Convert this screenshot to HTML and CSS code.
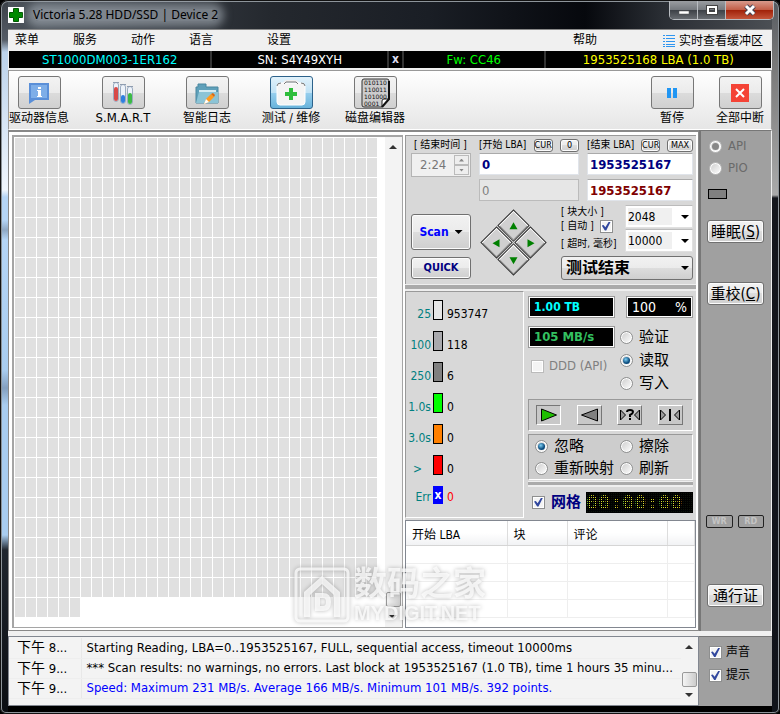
FILE: index.html
```html
<!DOCTYPE html>
<html lang="zh-CN">
<head>
    <meta charset="UTF-8">
    <meta name="viewport" content="width=device-width, initial-scale=1.0">
    <title>Victoria 5.28 HDD/SSD | Device 2</title>
    <link rel="stylesheet" href="styles.css">
</head>
<body>
<div class="window">
    <header class="titlebar">
        <svg class="app-icon" width="16" height="16" viewBox="0 0 16 16"><rect width="16" height="16" fill="#fff"/><path d="M5.500 1.500h5v4h4v5h-4v4h-5v-4h-4v-5h4z" fill="#008a00" stroke="#005a00"/></svg>
        <span class="title">Victoria 5.28 HDD/SSD | Device 2</span>
        <div class="win-buttons">
            <button class="win-btn" aria-label="Minimize"><svg width="12" height="12" viewBox="0 0 12 12"><path d="M1 7h10v3H1z" fill="#fff" stroke="#555" stroke-width=".5"/></svg></button>
            <button class="win-btn" aria-label="Maximize"><svg width="12" height="12" viewBox="0 0 12 12"><path d="M2 3h8v6H2z" fill="none" stroke="#444" stroke-width="4"/><path d="M2 3h8v6H2z" fill="none" stroke="#fff" stroke-width="2"/></svg></button>
            <button class="win-btn win-close" aria-label="Close"><svg width="14" height="12" viewBox="0 0 14 12"><path d="M3 2l8 8M11 2l-8 8" stroke="#445" stroke-width="5"/><path d="M3 2l8 8M11 2l-8 8" stroke="#fff" stroke-width="3"/></svg></button>
        </div>
    </header>

    <div class="client">
        <nav class="menubar">
            <a href="#">菜单</a>
            <a href="#">服务</a>
            <a href="#">动作</a>
            <a href="#">语言</a>
            <a href="#" class="menu-settings">设置</a>
            <a href="#" class="menu-help">帮助</a>
            <a href="#" class="menu-buffer"><svg width="12" height="12" viewBox="0 0 12 12"><path d="M0 .5h2M3 .5h9M0 3.500h2M3 3.500h9M0 6.500h2M3 6.500h9M0 9.500h2M3 9.500h9M0 11.500h2M3 11.500h9" stroke="#2e95f0"/></svg>实时查看缓冲区</a>
        </nav>

        <div class="infobar">
            <span class="info-model">ST1000DM003-1ER162</span>
            <span class="info-sn">SN: S4Y49XYH</span>
            <button class="info-x">x</button>
            <span class="info-fw">Fw: CC46</span>
            <span class="info-lba">1953525168 LBA (1.0 TB)</span>
        </div>

        <div class="toolbar">
            <div class="tool">
                <button class="tool-btn" id="t-info"><svg width="24" height="24" viewBox="0 0 24 24"><path d="M2 2h20v17H8l-6 4z" fill="#5a8fd8"/><path d="M4 4h16v13H4z" fill="#7eaee8"/><path d="M11 6h3v2h-3zM10 9h4v6h1v1h-5v-1h1v-5h-1z" fill="#fff"/></svg></button>
                <label for="t-info">驱动器信息</label>
            </div>
            <div class="tool">
                <button class="tool-btn" id="t-smart"><svg width="24" height="24" viewBox="0 0 24 24"><g stroke="#9aabc0" fill="#eef3fa"><rect x="2.500" y="1.500" width="5" height="19" rx="2.500"/><rect x="9.500" y="3.500" width="5" height="19" rx="2.500"/><rect x="16.500" y="5.500" width="5" height="18" rx="2.500"/></g><rect x="3" y="6" width="4" height="14" rx="2" fill="#d84a48"/><rect x="10" y="14" width="4" height="8" rx="2" fill="#2f7fe0"/><rect x="17" y="12" width="4" height="11" rx="2" fill="#3cba46"/><path d="M2 1.500h6M9 3.500h6M16 5.500h6" stroke="#8f9db0"/></svg></button>
                <label for="t-smart" class="smart">S.M.A.R.T</label>
            </div>
            <div class="tool">
                <button class="tool-btn" id="t-log"><svg width="26" height="24" viewBox="0 0 26 24"><path d="M2 22V6h2V3h8v3h12v16z" fill="#5fa0ba" stroke="#4a87a0"/><path d="M5 9h17v5H5z" fill="#d5ebf2"/><path d="M2 22l3-11h19v11z" fill="#8cc4d6"/><path d="M10 23l2-5 5-5 3 3-5 5z" fill="#ff9a1f"/><path d="M10 23l2-5 3 3z" fill="#fff"/><path d="M17 13l2-1 2 2-1 2z" fill="#e06a10"/></svg></button>
                <label for="t-log">智能日志</label>
            </div>
            <div class="tool">
                <button class="tool-btn tool-active" id="t-test"><svg width="30" height="26" viewBox="0 0 30 26"><path d="M8 4q0-3 3-3h8q3 0 3 3" fill="none" stroke="#eee" stroke-width="2"/><rect x="1" y="3" width="28" height="22" rx="3" fill="#f4f4f4" stroke="#fff"/><path d="M1 6q0-3 4-3M25 3q4 0 4 3M8 4l2-2h10l2 2" fill="none" stroke="#777"/><path d="M13 8h4v4h4v4h-4v4h-4v-4H9v-4h4z" fill="#2ebd3c"/></svg></button>
                <label for="t-test">测试 / 维修</label>
            </div>
            <div class="tool">
                <button class="tool-btn" id="t-editor"><svg width="30" height="30" viewBox="0 0 30 30"><path d="M4 1h23q2 0 2 2v18l-7 8H4q-2 0-2-2V3q0-2 2-2z" fill="#ccc" stroke="#333"/><path d="M22 29v-6q0-2 2-2h5z" fill="#fff" stroke="#222"/><path d="M29 3v18l-7 8" fill="none" stroke="#111" stroke-width="2"/><g font-family="DejaVu Sans" font-size="6" fill="#111"><text x="4" y="7">010110</text><text x="4" y="14">110011</text><text x="4" y="21">101000</text><text x="4" y="28">0001</text></g></svg></button>
                <label for="t-editor">磁盘编辑器</label>
            </div>
            <div class="tool tool-right">
                <button class="tool-btn" id="t-pause"><svg width="12" height="12" viewBox="0 0 12 12"><path d="M1 1h4v10H1zM7 1h4v10H7z" fill="#2196f3"/></svg></button>
                <label for="t-pause">暂停</label>
            </div>
            <div class="tool tool-break">
                <button class="tool-btn" id="t-break"><svg width="18" height="18" viewBox="0 0 18 18"><rect width="18" height="18" fill="#f44336"/><path d="M5 5l8 8M13 5l-8 8" stroke="#fff" stroke-width="2"/></svg></button>
                <label for="t-break">全部中断</label>
            </div>
        </div>

        <main class="main">
            <div class="workspace">
                <div class="map-panel">
                    <div class="map" id="map"></div>
                    <div class="scrollbar"><i class="up"></i><i class="thumb"></i><i class="down"></i></div>
                </div>

                <div class="control">
                    <section class="params">
                        <div class="param-side">
                            <label class="small-label" for="end-time">[ 结束时间 ]</label>
                            <div class="spin">
                                <input id="end-time" type="text" value="2:24" disabled>
                                <div class="spin-btns"><button disabled aria-label="Up"><i class="up"></i></button><button disabled aria-label="Down"><i class="down"></i></button></div>
                            </div>
                            <button class="btn scan">Scan <i class="drop"></i></button>
                            <button class="btn quick">QUICK</button>
                        </div>
                        <div class="param-body">
                            <div class="lba">
                                <div class="lba-head"><label for="start-lba">[开始 LBA]</label><button class="btn mini">CUR</button><button class="btn mini">0</button></div>
                                <div class="lba-head"><label for="end-lba">[结束 LBA]</label><button class="btn mini">CUR</button><button class="btn mini mini-max">MAX</button></div>
                                <input id="start-lba" type="text" value="0">
                                <input id="end-lba" type="text" value="1953525167">
                                <input class="gray" type="text" value="0" aria-label="Current LBA" disabled>
                                <input class="red" type="text" value="1953525167" aria-label="Last LBA">
                            </div>
                            <div class="param-low">
                                <div class="diamond">
                                    <button aria-label="Up"><svg width="10" height="10" viewBox="0 0 10 10"><path d="M5 1l4 7H1z"/></svg></button>
                                    <button aria-label="Right"><svg width="10" height="10" viewBox="0 0 10 10"><path d="M9 5L2 1v8z"/></svg></button>
                                    <button aria-label="Left"><svg width="10" height="10" viewBox="0 0 10 10"><path d="M1 5l7-4v8z"/></svg></button>
                                    <button aria-label="Down"><svg width="10" height="10" viewBox="0 0 10 10"><path d="M5 9L1 2h8z"/></svg></button>
                                </div>
                                <div class="settings">
                                    <div class="setting-labels">
                                        <label for="block">[ 块大小 ]</label>
                                        <label class="auto">[ 自动 ] <input type="checkbox" checked></label>
                                        <label for="timeout">[ 超时, 毫秒]</label>
                                    </div>
                                    <div class="setting-fields">
                                        <div class="combo"><select id="block"><option>2048</option></select></div>
                                        <div class="combo"><select id="timeout"><option>10000</option></select></div>
                                    </div>
                                    <div class="combo combo-end"><select aria-label="结束动作"><option>测试结束</option></select></div>
                                </div>
                            </div>
                        </div>
                    </section>

                    <div class="splitter"></div>

                    <section class="status">
                        <div class="legend">
                            <div class="leg"><span class="ms">25</span><i class="bar b1"></i><span>953747</span></div>
                            <div class="leg"><span class="ms">100</span><i class="bar b2"></i><span>118</span></div>
                            <div class="leg"><span class="ms">250</span><i class="bar b3"></i><span>6</span></div>
                            <div class="leg"><span class="ms">1.0s</span><i class="bar b4"></i><span>0</span></div>
                            <div class="leg"><span class="ms">3.0s</span><i class="bar b5"></i><span>0</span></div>
                            <div class="leg"><span class="ms ms-over">&gt;</span><i class="bar b6"></i><span>0</span></div>
                            <div class="leg err"><span class="ms">Err</span><i class="bar b7">x</i><span>0</span></div>
                        </div>
                        <div class="state">
                            <div class="readouts">
                                <div class="readout-left">
                                    <output class="lcd cyan">1.00 TB</output>
                                    <output class="lcd green">105 MB/s</output>
                                    <label class="opt ddd"><input type="checkbox" disabled>DDD (API)</label>
                                </div>
                                <div class="readout-right">
                                    <output class="lcd percent"><span>100</span><span>%</span></output>
                                    <label class="opt"><input type="radio" name="mode">验证</label>
                                    <label class="opt"><input type="radio" name="mode" checked>读取</label>
                                    <label class="opt"><input type="radio" name="mode">写入</label>
                                </div>
                            </div>
                            <div class="inset playback">
                                <button class="pressed" aria-label="Forward"><svg width="20" height="16" viewBox="0 0 20 16"><path d="M2.500 2v12l15-6z" fill="#1fc000" stroke="#000"/></svg></button>
                                <button aria-label="Back"><svg width="20" height="16" viewBox="0 0 20 16"><path d="M18.500 2v12l-16-6z" fill="#808080" stroke="#000"/></svg></button>
                                <button aria-label="Random"><svg width="22" height="16" viewBox="0 0 22 16"><path d="M1.500 3v10l5-5zM20.500 3v10l-5-5z" fill="#999" stroke="#000"/><path d="M8 5q0-2 3-2t3 2q0 1.500-3 3v2M11 11v2" fill="none" stroke="#000" stroke-width="2"/></svg></button>
                                <button aria-label="Butterfly"><svg width="22" height="16" viewBox="0 0 22 16"><path d="M1.500 3v10l5-5zM20.500 3v10l-5-5z" fill="#999" stroke="#000"/><path d="M11 2v12" stroke="#000" stroke-width="2"/></svg></button>
                            </div>
                            <div class="inset actions">
                                <label class="opt"><input type="radio" name="action" checked>忽略</label>
                                <label class="opt"><input type="radio" name="action">擦除</label>
                                <label class="opt"><input type="radio" name="action">重新映射</label>
                                <label class="opt"><input type="radio" name="action">刷新</label>
                            </div>
                            <div class="splitter splitter-small"></div>
                            <div class="grid-row">
                                <label class="opt grid-opt"><input type="checkbox" checked>网格</label>
                                <output class="clock">00:00:00</output>
                            </div>
                        </div>
                    </section>

                    <div class="defects">
                        <table>
                            <thead>
                                <tr><th class="c-lba">开始 LBA</th><th class="c-block">块</th><th class="c-note">评论</th><th></th></tr>
                            </thead>
                            <tbody>
                                <tr><td></td><td></td><td></td><td></td></tr>
                                <tr><td></td><td></td><td></td><td></td></tr>
                                <tr><td></td><td></td><td></td><td></td></tr>
                                <tr><td></td><td></td><td></td><td></td></tr>
                            </tbody>
                        </table>
                    </div>
                </div>

                <div class="watermark">
                    <svg width="56" height="56" viewBox="0 0 56 56"><rect x="2" y="2" width="52" height="52" rx="4"/><path d="M10 50V25l18-16 18 16v25h-6V28L28 17 16 28v22z"/><path d="M21 26h8q8 0 8 9t-8 9h-8zM26 31v8h3q3 0 3-4t-3-4z"/></svg>
                    <div><b>数码之家</b><span>MYDIGIT.NET</span></div>
                </div>
            </div>

            <aside class="sidebar">
                <label class="opt api"><input type="radio" name="api" checked disabled>API</label>
                <label class="opt api"><input type="radio" name="api" disabled>PIO</label>
                <i class="lamp"></i>
                <button class="btn side-btn">睡眠(<u>S</u>)</button>
                <button class="btn side-btn recal">重校(<u>C</u>)</button>
                <div class="leds"><span>WR</span><span>RD</span></div>
                <button class="btn side-btn">通行证</button>
            </aside>
        </main>

        <footer class="bottom">
            <div class="log">
                <table>
                    <tr><td class="time"><span>下午</span> 8...</td><td>Starting Reading, LBA=0..1953525167, FULL, sequential access, timeout 10000ms</td></tr>
                    <tr><td class="time"><span>下午</span> 9...</td><td>*** Scan results: no warnings, no errors. Last block at 1953525167 (1.0 TB), time 1 hours 35 minu...</td></tr>
                    <tr class="speed"><td class="time"><span>下午</span> 9...</td><td>Speed: Maximum 231 MB/s. Average 166 MB/s. Minimum 101 MB/s. 392 points.</td></tr>
                </table>
                <div class="scrollbar"><i class="up"></i><i class="thumb"></i><i class="down"></i></div>
            </div>
            <div class="log-opts">
                <label class="opt"><input type="checkbox" checked>声音</label>
                <label class="opt"><input type="checkbox" checked>提示</label>
            </div>
        </footer>
    </div>
</div>

<script>
    // one cell per displayed block of the scan
    const map = document.getElementById("map");
    for (let i = 0; i < 765; i++) {
        map.appendChild(document.createElement("i"));
    }
</script>
</body>
</html>
```

FILE: styles.css
```css
* {
    box-sizing: border-box;
}

body {
    margin: 0;
    background-color: #000;
    font: 12px/16px "DejaVu Sans Condensed", "Noto Sans CJK SC", sans-serif;
    color: #000;
}

button, input, select {
    font: inherit;
    color: inherit;
    margin: 0;
    padding: 0;
}

svg {
    display: block;
}

.window {
    display: flex;
    flex-direction: column;
    min-height: 100vh;
    padding: 0 8px 8px;
    border-radius: 8px 8px 6px 6px;
    box-shadow: inset 0 0 0 1px #111, inset 0 0 0 2px #8d949a;
    background: linear-gradient(#3c4148, #555c66 40px, #bcd3ec 52px, #f0f6fd 190px, #b5d5f6 197px, #b5d5f6 220px, #8fa8c4 230px, #b5d5f6 240px, #a9cdf0 370px, #84a0c0 388px, #a9cdf0 405px, #a9cdf0 535px, #20262e 550px, #0a0d12) 0 0 / 8px 100% no-repeat,
        linear-gradient(#555a60, #777 60px, #aaa 195px, #14161c 198px, #10131a) 100% 0 / 8px 100% no-repeat,
        linear-gradient(#000, #000) 0 100% / 100% 8px no-repeat,
        linear-gradient(90deg, #4d545c, #24282e 35%, #1a1e25 55%, #06080d 75%, #2a2e34 85%, #4d5156);
}

/* title bar */
.titlebar {
    display: flex;
    align-items: center;
    height: 29px;
}

.title {
    margin-left: 9px;
    font-family: "Noto Sans", sans-serif;
    background-color: rgba(170, 178, 186, .6);
    box-shadow: 0 0 8px 6px rgba(170, 178, 186, .6);
    border-radius: 6px;
    line-height: 12px;
}

.win-buttons {
    display: flex;
    align-self: flex-start;
    margin: 1px -2px 0 auto;
    border: 1px solid #b9bdc2;
    border-top: 0;
    border-radius: 0 0 5px 5px;
    overflow: hidden;
}

.win-btn {
    display: grid;
    place-items: center;
    width: 28px;
    height: 18px;
    border: 0;
    border-right: 1px solid #b9bdc2;
    background: linear-gradient(#9a9da1, #74787d 50%, #3c4046 50%, #686c71);
}

.win-close {
    width: 47px;
    border-right: 0;
    background: linear-gradient(#d89a8c, #c25c45 50%, #a02008 50%, #c4553a);
}

.client {
    flex: 1;
    display: flex;
    flex-direction: column;
    border-top: 1px solid #888;
    background-color: #f0f0f0;
}

/* menu */
.menubar {
    display: flex;
    gap: 34px;
    height: 21px;
    padding: 0 9px 0 7px;
    line-height: 20px;
}

.menubar a {
    color: #000;
    text-decoration: none;
}

.menu-settings {
    margin-left: 20px;
}

.menu-help {
    margin-left: auto;
}

.menu-buffer {
    display: flex;
    align-items: center;
    gap: 4px;
    margin-left: 32px;
}

/* drive passport line */
.infobar {
    display: flex;
    gap: 2px;
    height: 17px;
    margin: 0 1px;
    background-color: #333;
    font-size: 13px;
    line-height: 17px;
    text-align: center;
}

.infobar > * {
    background-color: #000;
}

.info-model {
    flex: 202;
    color: #0ff;
}

.info-sn {
    flex: 175;
    color: #fff;
}

.info-x {
    width: 13px;
    border: 0;
    color: #dcdcf0;
    font-size: 12px;
    font-weight: bold;
}

.info-fw {
    flex: 140;
    color: #0f0;
}

.info-lba {
    flex: 226;
    color: #ff0;
}

/* toolbar */
.toolbar {
    display: flex;
    gap: 24px;
    height: 60px;
    margin-top: 2px;
    padding: 5px 1px 0 0;
    border: 1px solid #999;
    border-bottom-color: #fff;
    background: linear-gradient(#fff, #e6e6e6);
}

.tool {
    display: flex;
    flex-direction: column;
    align-items: center;
    width: 60px;
    gap: 1px;
    white-space: nowrap;
}

.tool-btn {
    display: grid;
    place-items: center;
    width: 43px;
    height: 33px;
    border: 1px solid #777;
    border-radius: 3px;
    background: linear-gradient(#f3f3f3, #ebebeb 50%, #dcdcdc 50%, #d0d0d0);
}

.tool-active {
    border-color: #2c628b;
    background: linear-gradient(#e2f2fb, #c0e2f5 50%, #98cfee 50%, #68b3db);
}

.smart {
    font-size: 13px;
}

.tool-right {
    margin-left: auto;
}

.tool-break {
    margin-left: -16px;
}

/* main area */
.main {
    flex: 1;
    display: flex;
}

.workspace {
    position: relative;
    flex: 1;
    display: flex;
    gap: 2px;
    padding: 3px 2px 2px 3px;
    border: 1px solid #888;
    border-top-width: 2px;
    background-color: #fff;
}

.map-panel {
    flex: 1;
    display: flex;
    justify-content: space-between;
    border: 2px solid #a5a5a5;
    border-width: 2px 1px 1px 2px;
    background-color: #fff;
}

.map {
    flex: 1;
    display: grid;
    grid-template-columns: repeat(auto-fill, 10px);
    grid-auto-rows: 19px;
    gap: 1px;
    padding: 1px;
}

.map i {
    background-color: #e0e0e0;
}

.scrollbar {
    display: flex;
    flex-direction: column;
    align-items: center;
    width: 17px;
    padding: 8px 1px 8px 0;
    background-color: #f3f3f3;
}

.up, .down, .drop {
    width: 8px;
    height: 4px;
    background-color: #333;
    clip-path: polygon(0 0, 100% 0, 50% 100%);
}

.up {
    clip-path: polygon(50% 0, 100% 100%, 0 100%);
}

.thumb {
    width: 15px;
    height: 15px;
    margin: auto 0 8px;
    border: 1px solid #999;
    border-radius: 2px;
    background: linear-gradient(90deg, #f4f4f4, #ccc);
}

/* control panel */
.control {
    width: 291px;
    display: flex;
    flex-direction: column;
    background-color: #d8d8d8;
}

.params {
    display: flex;
    gap: 8px;
    padding: 1px 3px 4px 5px;
    border: 1px solid #999;
    border-width: 1px 0 0 1px;
}

.param-side {
    display: flex;
    flex-direction: column;
    width: 60px;
}

.small-label, .lba-head label, .setting-labels {
    font-size: 10px;
    line-height: 16px;
    white-space: nowrap;
}

.small-label {
    padding-left: 3px;
}

.spin {
    display: flex;
    height: 24px;
    padding: 1px;
    border: 1px solid #b4b4b4;
    background-color: #f0f0f0;
}

.spin input {
    flex: 1;
    width: 0;
    border: 0;
    padding-left: 7px;
    background: none;
    color: #777;
    font-size: 13px;
}

.spin-btns {
    display: flex;
    flex-direction: column;
    width: 15px;
}

.spin-btns button {
    flex: 1;
    display: grid;
    place-items: center;
    border: 1px solid #bbb;
    background-color: #eee;
}

.spin-btns i {
    width: 5px;
    height: 3px;
    background-color: #888;
}

.btn {
    border: 1px solid #707070;
    border-radius: 3px;
    box-shadow: inset 0 0 0 1px #fcfcfc;
    background: linear-gradient(#f2f2f2, #ebebeb 50%, #dddddd 50%, #cfcfcf);
}

.scan {
    display: flex;
    align-items: center;
    justify-content: center;
    gap: 6px;
    height: 36px;
    margin-top: 37px;
    color: #00f;
    font-weight: bold;
}

.scan .drop {
    background-color: #000;
}

.quick {
    height: 22px;
    margin-top: 7px;
    color: #000080;
    font-weight: bold;
    font-size: 11px;
}

.param-body {
    flex: 1;
}

.lba {
    display: grid;
    grid-template-columns: 100px 1fr;
    column-gap: 8px;
    row-gap: 4px;
}

.lba-head {
    display: flex;
    align-items: center;
    justify-content: space-between;
    height: 16px;
    margin-bottom: -4px;
}

.mini {
    width: 19px;
    height: 13px;
    font-size: 9px;
    line-height: 10px;
}

.mini-max {
    width: 26px;
}

.lba input {
    width: 100%;
    height: 22px;
    padding: 0 2px;
    border: 1px solid #e0e4ea;
    border-top-color: #aaa;
    background-color: #fff;
    color: #000080;
    font-size: 13px;
    font-weight: bold;
}

.lba input.red {
    color: #800000;
}

.lba input.gray {
    background-color: #e6e6e6;
    color: #808080;
    font-weight: normal;
}

.param-low {
    display: flex;
    align-items: center;
    justify-content: space-between;
    margin-top: 4px;
}

.diamond {
    display: grid;
    grid-template-columns: 23px 23px;
    grid-auto-rows: 23px;
    gap: 1px;
    margin-left: 11px;
    transform: rotate(45deg);
}

.diamond button {
    display: grid;
    place-items: center;
    border: 1px solid #333;
    box-shadow: inset 1px 1px #fff, inset -1px -1px #999;
    background-color: #d0d0d0;
}

.diamond svg {
    transform: rotate(-45deg);
    fill: #008000;
}

.settings {
    display: grid;
    grid-template-columns: 1fr 68px;
    width: 132px;
    row-gap: 4px;
}

.setting-labels {
    display: flex;
    flex-direction: column;
    line-height: 14px;
}

.setting-labels label:last-child {
    margin-top: 4px;
}

.auto {
    display: flex;
    align-items: center;
    gap: 6px;
}

.setting-fields {
    display: flex;
    flex-direction: column;
    gap: 1px;
}

.combo {
    position: relative;
    height: 23px;
}

.combo select {
    appearance: none;
    width: 100%;
    height: 100%;
    padding-left: 2px;
    border: 1px solid #e0e0e0;
    border-top-color: #bbb;
    border-radius: 0;
    background: linear-gradient(#f0f0f0, #f0f0f0) 2px 2px / 44px 17px no-repeat #fff;
    outline: 0;
}

.combo::after {
    content: "";
    position: absolute;
    right: 4px;
    top: 10px;
    width: 8px;
    height: 4px;
    background-color: #000;
    clip-path: polygon(0 0, 100% 0, 50% 100%);
}

.combo-end {
    grid-column: 1 / -1;
    height: 24px;
}

.combo-end select {
    padding-left: 4px;
    border: 1px solid #707070;
    border-radius: 3px;
    background: linear-gradient(#f2f2f2, #ebebeb 50%, #dddddd 50%, #cfcfcf);
    font-size: 16px;
    font-weight: bold;
}

.splitter {
    height: 7px;
    border: solid #eee;
    border-width: 1px 0 2px;
    background-color: #aaa;
}

/* inputs */
input[type="checkbox"], input[type="radio"] {
    appearance: none;
    display: grid;
    place-items: center;
    flex: none;
    width: 13px;
    height: 13px;
    border: 1px solid #8e8f8f;
    background-color: #f4f4f4;
    box-shadow: inset 0 0 0 1px #fff;
}

input[type="radio"] {
    border-radius: 50%;
    background: linear-gradient(135deg, #ccc, #fff);
}

input[type="checkbox"]:checked::before {
    content: "";
    width: 9px;
    height: 9px;
    background-color: #31479e;
    clip-path: polygon(0 45%, 20% 40%, 40% 65%, 80% 0, 100% 0, 50% 100%, 35% 100%);
}

input[type="radio"]:checked::before {
    content: "";
    width: 7px;
    height: 7px;
    border-radius: 50%;
    background: radial-gradient(circle at 40% 35%, #7fd0f5, #0a4a7c 60%);
}

input:disabled {
    border-color: #bbb;
}

input[type="radio"]:disabled:checked::before {
    background: #888;
}

.opt {
    display: flex;
    align-items: center;
    gap: 6px;
    font-size: 15px;
    line-height: 22px;
    white-space: nowrap;
}

/* speed legend and state */
.status {
    display: flex;
    height: 227px;
}

.legend {
    display: flex;
    flex-direction: column;
    gap: 11px;
    width: 119px;
    padding: 8px 0 0;
    border: 1px solid #999;
    border-right-color: #fff;
    border-bottom-color: #fff;
}

.leg {
    display: grid;
    grid-template-columns: 25px 10px 1fr;
    column-gap: 2px;
    height: 20px;
    line-height: 29px;
}

.leg span:last-child {
    padding-left: 2px;
}

.ms {
    color: #008080;
    text-align: right;
}

.ms-over {
    padding-right: 9px;
}

.bar {
    height: 20px;
    border: 1px solid #000;
}

.b1 { background-color: #e6e6e6; }
.b2 { background-color: #a9a9ad; }
.b3 { background-color: #808080; }
.b4 { background-color: #0f0; }
.b5 { background-color: #ff8000; }
.b6 { background-color: #f00; }

.b7 {
    height: 18px;
    border: 0;
    background-color: #00f;
    color: #fff;
    font-style: normal;
    font-weight: bold;
    line-height: 18px;
    text-align: center;
}

.err {
    color: #f00;
}

.err .ms, .err span {
    line-height: 22px;
}

.state {
    flex: 1;
    display: flex;
    flex-direction: column;
    padding: 5px 3px 0 4px;
}

.readouts {
    display: flex;
    justify-content: space-between;
    height: 100px;
}

.readout-left {
    display: flex;
    flex-direction: column;
    gap: 8px;
}

.readout-right {
    width: 73px;
}

.lcd {
    display: flex;
    width: 87px;
    height: 22px;
    padding: 0 5px;
    border: 1px solid #999;
    box-shadow: inset 0 0 0 1px #fff;
    background-color: #000;
    font-size: 12px;
    font-weight: bold;
    line-height: 20px;
}

.cyan {
    color: #0ff;
}

.green {
    color: #33c060;
    font-size: 13px;
}

.percent {
    justify-content: space-between;
    width: 67px;
    margin: 0 0 8px auto;
    color: #fff;
    font-size: 14px;
    font-weight: normal;
}

.readout-right .opt {
    line-height: 23px;
}

.ddd {
    gap: 5px;
    margin-left: 3px;
    color: #808080;
    font-size: 13px;
    line-height: 20px;
}

.inset {
    border: 1px solid #999;
    border-right-color: #fff;
    border-bottom-color: #fff;
    background-color: #cdcdcd;
}

.playback {
    display: flex;
    justify-content: space-between;
    height: 32px;
    margin: 3px 0;
    padding: 5px 9px 0 7px;
}

.playback button {
    display: grid;
    place-items: center;
    width: 25px;
    height: 20px;
    border: 1px solid #fff;
    border-right-color: #777;
    border-bottom-color: #777;
    background-color: #c8c8c8;
}

.playback .pressed {
    border-color: #777 #fff #fff #777;
}

.actions {
    display: grid;
    grid-template-columns: 85px 1fr;
    height: 46px;
    padding-left: 6px;
}

.splitter-small {
    height: 6px;
    margin-top: 1px;
}

.grid-row {
    display: flex;
    align-items: center;
    justify-content: space-between;
    height: 30px;
    padding-left: 4px;
}

.grid-opt {
    color: #000080;
    font-weight: bold;
}

.clock {
    position: relative;
    width: 107px;
    height: 21px;
    background-color: #000;
    color: #ffff30;
    font: bold 20px/20px "DejaVu Sans Mono", monospace;
}

/* dot matrix over the digits */
.clock::after {
    content: "";
    position: absolute;
    inset: 0;
    background: repeating-linear-gradient(90deg, #000 0 1px, transparent 1px 2px), repeating-linear-gradient(#000 0 1px, rgba(60, 90, 40, .2) 1px 2px);
}

/* defect table */
.defects {
    flex: 1;
    margin-top: 2px;
    border: 1px solid #828790;
    background-color: #fff;
}

table {
    width: 100%;
    border-collapse: collapse;
    table-layout: fixed;
}

th, td {
    padding: 0;
    text-align: left;
    font-weight: normal;
    white-space: nowrap;
}

.defects th {
    height: 24px;
    padding: 4px 0 0 6px;
    border-right: 1px solid #ddd;
    border-bottom: 1px solid #d5d5d5;
    background: linear-gradient(#fff 50%, #f1f2f4);
}

.defects td {
    height: 18px;
    border-right: 1px solid #eee;
    border-bottom: 1px solid #eee;
}

.c-lba { width: 101px; }
.c-block { width: 60px; }
.c-note { width: 100px; }

.watermark {
    position: absolute;
    right: 212px;
    bottom: 6px;
    display: flex;
    gap: 4px;
    align-items: center;
    color: rgba(255, 255, 255, .75);
    filter: drop-shadow(0 0 2px rgba(0, 0, 0, .35));
    pointer-events: none;
}

.watermark svg {
    fill: rgba(255, 255, 255, .75);
    fill-rule: evenodd;
}

.watermark svg rect {
    fill: none;
    stroke: rgba(255, 255, 255, .75);
    stroke-width: 3px;
}

.watermark b, .watermark span {
    display: block;
    font-family: "Liberation Sans", "Noto Sans CJK SC", sans-serif;
    font-weight: bold;
}

.watermark b {
    font-size: 33px;
    line-height: 36px;
}

.watermark span {
    font-size: 20px;
    line-height: 22px;
}

/* right sidebar */
.sidebar {
    display: flex;
    flex-direction: column;
    width: 73px;
    padding: 4px 7px 24px 6px;
    border: 1px solid #777;
    border-width: 1px 1px 0 2px;
    border-right-color: #eee;
    background-color: #a0a0a0;
}

.api {
    padding-left: 2px;
    color: #6a6a6a;
    font-size: 13px;
}

.lamp {
    width: 19px;
    height: 10px;
    margin: 10px 0 21px 1px;
    border: 1px solid #000;
    background-color: #808080;
}

.side-btn {
    height: 23px;
    font-size: 15px;
    line-height: 18px;
    white-space: nowrap;
}

.recal {
    margin-top: 39px;
}

.leds {
    display: flex;
    gap: 5px;
    margin: auto 0 56px -1px;
}

.leds span {
    width: 27px;
    border: 1px solid #222;
    border-radius: 2px;
    color: #c4c4c4;
    font-size: 9px;
    font-weight: bold;
    line-height: 11px;
    text-align: center;
}

/* log */
.bottom {
    display: flex;
    height: 70px;
    margin-top: 5px;
}

.log {
    flex: 1;
    display: flex;
    border: 1px solid #828790;
    background-color: #f3f3f3;
    font-size: 13px;
}

.log table {
    flex: 1;
    align-self: flex-start;
    width: 0;
    margin-top: 1px;
}

.log td {
    height: 20px;
    padding-left: 5px;
    border-bottom: 1px solid #eee;
    overflow: hidden;
}

.log .time {
    width: 72px;
    padding-left: 8px;
    border-right: 1px solid #e8e8e8;
}

.time span {
    font-size: 14px;
}

.log .speed {
    color: #00f;
}

.log .speed .time {
    color: #000;
}

.log .scrollbar .thumb {
    margin-bottom: 6px;
}

.log-opts {
    width: 73px;
    padding: 4px 0 0 10px;
    border-top: 1px solid #777;
    background-color: #a0a0a0;
}

.log-opts .opt {
    gap: 4px;
    font-size: 12px;
    line-height: 23px;
}
```
